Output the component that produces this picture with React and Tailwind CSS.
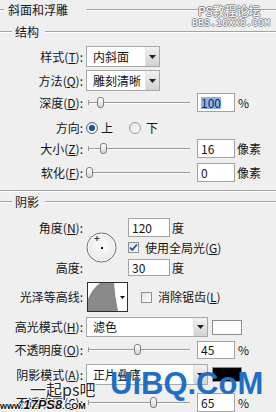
import React from 'react'

const Line = ({ className = '' }) => (
  <div className={`h-[2px] border-t border-t-[#a3a3a3] border-b border-b-white ${className}`} />
)

function Label({ text, k }) {
  return (
    <div className="w-[83px] shrink-0 text-right whitespace-nowrap">
      {text}
      {k && (
        <>
          (<span className="underline">{k}</span>)
        </>
      )}
      :
    </div>
  )
}

function Select({ value, className = '' }) {
  return (
    <div className={`flex h-full border border-[#a8a8a8] bg-white ${className}`}>
      <div className="flex-1 flex items-center pl-[6px]">{value}</div>
      <div className="w-[14px] flex items-center justify-center bg-linear-to-b from-[#f2f2f2] to-[#d2d2d2] border-l border-l-[#e4e4e4]">
        <svg width="7" height="4" viewBox="0 0 7 4">
          <path d="M0 0h7L3.5 4z" fill="#222" />
        </svg>
      </div>
    </div>
  )
}

function Num({ v, sel, className = 'w-[38px]' }) {
  return (
    <div className={`h-full border border-[#a3a3a3] bg-white flex items-center pl-[3px] ${className}`}>
      {sel ? <span className="bg-[#8db2e3] text-[#0b2a66]">{v}</span> : v}
    </div>
  )
}

function Slider({ pos }) {
  return (
    <div className="relative w-[104px] h-full">
      <div className="absolute left-[2px] right-0 top-1/2 -mt-[1px] h-[2px] border-t border-t-[#9a9a9a] border-b border-b-white" />
      <div className="absolute left-[2px] top-1/2 -mt-[3px] w-[1px] h-[5px] bg-[#9a9a9a]" />
      <div
        className="absolute top-1/2 -mt-[6px] w-[7px] h-[11px] rounded-[3px] border border-[#7d7d7d] bg-linear-to-b from-white to-[#d6d6d6]"
        style={{ left: pos }}
      />
    </div>
  )
}

function Radio({ checked, className = '' }) {
  return (
    <div
      className={`w-[12px] h-[12px] rounded-full border flex items-center justify-center ${
        checked ? 'border-[#4d6a8c] bg-linear-to-br from-[#cfdceb] to-white' : 'border-[#9a9a9a] bg-linear-to-br from-[#e2e2e2] to-white'
      } ${className}`}
    >
      {checked && <div className="w-[6px] h-[6px] rounded-full bg-[#1e4f8e]" />}
    </div>
  )
}

function Check({ checked, className = '' }) {
  return (
    <div className={`w-[11px] h-[11px] border border-[#8e8f8f] bg-linear-to-br from-[#e3e3e3] to-white flex items-center justify-center ${className}`}>
      {checked && (
        <svg width="9" height="9" viewBox="0 0 9 9">
          <path d="M1 4.5l2.3 2.5L8 1.5" fill="none" stroke="#1c4f9a" strokeWidth="1.8" />
        </svg>
      )}
    </div>
  )
}

export default function App() {
  return (
    <div className="relative w-[276px] h-[412px] overflow-hidden bg-[#efefef] text-[12px] leading-none text-[#151515] font-['Noto_Sans_CJK_SC','Liberation_Sans',sans-serif]">
      {/* 标题 */}
      <div className="flex items-center h-[20px]">
        <Line className="w-[4px]" />
        <span className="ml-[4px]">斜面和浮雕</span>
        <Line className="ml-[18px] flex-1" />
      </div>

      <div className="flex items-center h-[20px] mt-[2px]">
        <Line className="w-[12px]" />
        <span className="ml-[3px]">结构</span>
        <Line className="ml-[6px] flex-1" />
      </div>

      <div className="flex items-center gap-[3px] h-[21px] mt-[4px]">
        <Label text="样式" k="T" />
        <Select value="内斜面" className="w-[74px]" />
      </div>

      <div className="flex items-center gap-[3px] h-[21px] mt-[3px]">
        <Label text="方法" k="Q" />
        <Select value="雕刻清晰" className="w-[74px]" />
      </div>

      <div className="flex items-center h-[19px] mt-[2px]">
        <Label text="深度" k="D" />
        <div className="ml-[3px] h-full"><Slider pos={11} /></div>
        <Num v="100" sel className="w-[38px] ml-[7px]" />
        <span className="ml-[3px]">%</span>
      </div>

      <div className="flex items-center h-[16px] mt-[8px]">
        <Label text="方向" />
        <Radio checked className="ml-[3px]" />
        <span className="ml-[3px]">上</span>
        <Radio className="ml-[16px]" />
        <span className="ml-[5px]">下</span>
      </div>

      <div className="flex items-center h-[19px] mt-[3px]">
        <Label text="大小" k="Z" />
        <div className="ml-[3px] h-full"><Slider pos={14} /></div>
        <Num v="16" className="w-[38px] ml-[7px]" />
        <span className="ml-[2px]">像素</span>
      </div>

      <div className="flex items-center h-[19px] mt-[5px]">
        <Label text="软化" k="F" />
        <div className="ml-[3px] h-full"><Slider pos={0} /></div>
        <Num v="0" className="w-[38px] ml-[7px]" />
        <span className="ml-[2px]">像素</span>
      </div>

      <Line className="mt-[8px] w-full" />

      {/* 阴影 */}
      <div className="flex items-center h-[16px] mt-[2px]">
        <Line className="w-[12px]" />
        <span className="ml-[3px]">阴影</span>
        <Line className="ml-[6px] flex-1" />
      </div>

      <div className="flex mt-[8px]">
        <div className="w-[83px] shrink-0">
          <div className="h-[19px] flex items-center justify-end">
            角度(<span className="underline">N</span>):
          </div>
          <div className="h-[17px] mt-[22px] flex items-center justify-end">高度:</div>
        </div>
        <div className="w-[42px] ml-[3px] pt-[14px]">
          <svg width="31" height="31" viewBox="0 0 31 31">
            <defs>
              <radialGradient id="dial" cx="50%" cy="45%" r="60%">
                <stop offset="0%" stopColor="#ffffff" />
                <stop offset="100%" stopColor="#e4e4e4" />
              </radialGradient>
            </defs>
            <circle cx="15.5" cy="15.5" r="14.5" fill="url(#dial)" stroke="#6f6f6f" strokeWidth="1" />
            <circle cx="15.5" cy="15.5" r="13.3" fill="none" stroke="#ffffff" strokeWidth="1" />
            <rect x="15" y="15" width="2" height="2" fill="#111" />
            <path d="M11 4v5M8.5 6.5h5" stroke="#333" strokeWidth="1" />
          </svg>
        </div>
        <div className="flex flex-col">
          <div className="flex items-center h-[19px]">
            <Num v="120" className="w-[42px]" />
            <span className="ml-[2px]">度</span>
          </div>
          <div className="flex items-center h-[11px] mt-[5px]">
            <Check checked />
            <span className="ml-[6px] whitespace-nowrap">
              使用全局光(<span className="underline">G</span>)
            </span>
          </div>
          <div className="flex items-center h-[17px] mt-[6px]">
            <Num v="30" className="w-[42px]" />
            <span className="ml-[2px]">度</span>
          </div>
        </div>
      </div>

      <div className="flex items-center h-[30px] mt-[6px]">
        <Label text="光泽等高线" />
        <div className="ml-[4px] w-[41px] h-full border border-[#2e2e2e] flex bg-white">
          <svg width="30" height="28" viewBox="0 0 30 28">
            <rect width="30" height="28" fill="#ffffff" />
            <path d="M0 28V16Q4 6 12 0H26Q27 14 30 28Z" fill="#8a8a8a" />
          </svg>
          <div className="flex-1 flex items-center justify-center">
            <svg width="5" height="3" viewBox="0 0 5 3">
              <path d="M0 0h5L2.5 3z" fill="#111" />
            </svg>
          </div>
        </div>
        <Check className="ml-[13px]" />
        <span className="ml-[6px] whitespace-nowrap">
          消除锯齿(<span className="underline">L</span>)
        </span>
      </div>

      <div className="flex items-center gap-[3px] h-[20px] mt-[5px]">
        <Label text="高光模式" k="H" />
        <Select value="滤色" className="w-[122px]" />
        <div className="ml-[1px] w-[30px] h-[15px] border border-[#8d8d8d] bg-white" />
      </div>

      <div className="flex items-center h-[18px] mt-[4px]">
        <Label text="不透明度" k="O" />
        <div className="ml-[3px] h-full"><Slider pos={48} /></div>
        <Num v="45" className="w-[38px] ml-[7px]" />
        <span className="ml-[3px]">%</span>
      </div>

      <div className="flex items-center gap-[3px] h-[21px] mt-[5px]">
        <Label text="阴影模式" k="A" />
        <Select value="正片叠底" className="w-[122px]" />
        <div className="ml-[1px] w-[30px] h-[15px] border border-[#8d8d8d] bg-black" />
      </div>

      <div className="flex items-center h-[19px] mt-[8px]">
        <Label text="不透明度" k="C" />
        <div className="ml-[3px] h-full"><Slider pos={64} /></div>
        <Num v="65" className="w-[38px] ml-[7px]" />
        <span className="ml-[3px]">%</span>
      </div>

      {/* 水印 */}
      <div className="absolute left-[198px] top-[5px] text-[12px] text-white [text-shadow:1px_0_#8a8a8a,-1px_0_#8a8a8a,0_1px_#8a8a8a,0_-1px_#8a8a8a] whitespace-nowrap">
        PS教程论坛
      </div>
      <div className="absolute left-[192px] top-[19px] text-[10px] font-['Liberation_Mono',monospace] text-white [text-shadow:1px_0_#8a8a8a,-1px_0_#8a8a8a,0_1px_#8a8a8a,0_-1px_#8a8a8a] whitespace-nowrap">
        BBS.16XX8.COM
      </div>
      <div className="absolute left-[110px] top-[368px] text-[31px] font-bold font-['Liberation_Sans',sans-serif] text-[#1f6fc6] whitespace-nowrap">
        UiBQ.CoM
      </div>
      <div className="absolute left-[30px] top-[381px] text-[16px] text-[#2a2a2a] [text-shadow:1px_0_#fff,-1px_0_#fff,0_1px_#fff,0_-1px_#fff] whitespace-nowrap">
        一起ps吧
      </div>
      <div className="absolute left-[0px] top-[398px] flex items-end font-['Liberation_Sans',sans-serif] font-bold text-[#111] [text-shadow:1px_0_#fff,-1px_0_#fff,0_1px_#fff,0_-1px_#fff] whitespace-nowrap">
        <span className="text-[9px]">www.</span>
        <span className="text-[13px] italic">17PS8</span>
        <span className="text-[9px]">.COM</span>
      </div>
    </div>
  )
}
